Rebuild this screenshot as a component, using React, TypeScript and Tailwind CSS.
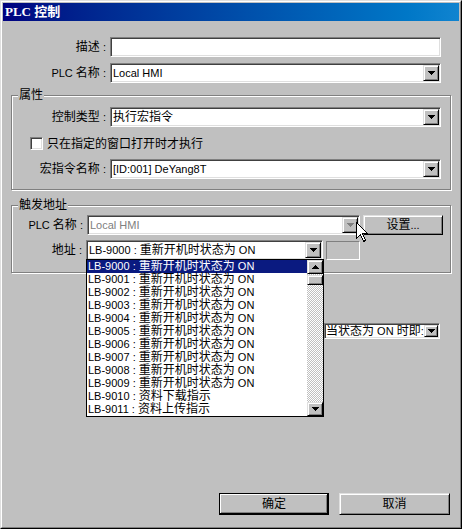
import React from "react"

const sunken =
  "border border-t-[#808080] border-l-[#808080] border-b-white border-r-white shadow-[inset_1px_1px_0_#404040,inset_-1px_-1px_0_#dfdfdf]"
const raised =
  "border border-t-[#dfdfdf] border-l-[#dfdfdf] border-b-black border-r-black shadow-[inset_1px_1px_0_#ffffff,inset_-1px_-1px_0_#808080]"
const etched = "border border-[#808080] shadow-[1px_1px_0_#ffffff,inset_1px_1px_0_#ffffff]"

// Latin runs at 11px, CJK runs at 12px (like the old Tahoma + SimSun mix)
const Txt = ({ children }: { children: string }) => (
  <>
    {children.split(/([\u4e00-\u9fff]+)/).map((part, i) =>
      /[\u4e00-\u9fff]/.test(part) ? (
        <span key={i} className="text-[12px]">
          {part}
        </span>
      ) : (
        <React.Fragment key={i}>{part}</React.Fragment>
      )
    )}
  </>
)

const Arrow = ({ up = false, color = "#000" }: { up?: boolean; color?: string }) => (
  <svg width="7" height="4" viewBox="0 0 7 4" shapeRendering="crispEdges">
    <path
      d={
        up
          ? "M3 0h1v1h1v1h1v1h1v1h-7v-1h1v-1h1v-1h1z"
          : "M0 0h7v1h-1v1h-1v1h-1v1h-1v-1h-1v-1h-1v-1h-1z"
      }
      fill={color}
    />
  </svg>
)

const DropButton = ({ disabled = false }: { disabled?: boolean }) => (
  <div className={`${raised} w-[16px] h-[16px] bg-[#c0c0c0] flex items-center justify-center shrink-0`}>
    <Arrow color={disabled ? "#808080" : "#000"} />
  </div>
)

const Combo = ({ value, className, disabled = false }: { value: string; className: string; disabled?: boolean }) => (
  <div className={`${sunken} ${className} h-[20px] bg-white p-[1px] flex items-center`}>
    <span className={`flex-1 pl-[1px] whitespace-nowrap overflow-hidden ${disabled ? "text-[#808080]" : ""}`}>
      <Txt>{value}</Txt>
    </span>
    <DropButton disabled={disabled} />
  </div>
)

const Label = ({ text, className }: { text: string; className: string }) => (
  <span className={`${className} text-right whitespace-nowrap`}>
    <Txt>{text}</Txt>
  </span>
)

const items = [
  "LB-9000 : 重新开机时状态为 ON",
  "LB-9001 : 重新开机时状态为 ON",
  "LB-9002 : 重新开机时状态为 ON",
  "LB-9003 : 重新开机时状态为 ON",
  "LB-9004 : 重新开机时状态为 ON",
  "LB-9005 : 重新开机时状态为 ON",
  "LB-9006 : 重新开机时状态为 ON",
  "LB-9007 : 重新开机时状态为 ON",
  "LB-9008 : 重新开机时状态为 ON",
  "LB-9009 : 重新开机时状态为 ON",
  "LB-9010 : 资料下载指示",
  "LB-9011 : 资料上传指示",
]

export default function App() {
  return (
    <div className="relative w-[462px] h-[529px] bg-[#c0c0c0] border border-t-[#dfdfdf] border-l-[#dfdfdf] border-r-black border-b-black font-['Liberation_Sans','Noto_Sans_CJK_SC',sans-serif] text-[11px] text-black">
      <div className="h-full flex flex-col border border-t-white border-l-white border-r-[#808080] border-b-[#808080] p-[1px]">
        {/* Title bar */}
        <div className="h-[18px] shrink-0 bg-linear-to-r from-[#000080] to-[#1084d0] flex items-center pl-[2px] text-white font-bold font-['Liberation_Serif','Noto_Sans_CJK_SC',serif] text-[13px]">
          PLC 控制
        </div>

        <div className="flex-1 flex flex-col">
          {/* Top rows */}
          <div className="flex items-center mt-[16px]">
            <Label text="描述 :" className="w-[103px]" />
            <div className={`${sunken} ml-[4px] w-[331px] h-[20px] bg-white`} />
          </div>
          <div className="flex items-center mt-[6px]">
            <Label text="PLC 名称 :" className="w-[103px]" />
            <Combo value="Local HMI" className="ml-[4px] w-[331px]" />
          </div>

          {/* 属性 */}
          <div className={`${etched} relative ml-[8px] mt-[12px] w-[440px] pt-[11px] pb-[10px]`}>
            <span className="absolute left-[6px] -top-[7px] px-[1px] bg-[#c0c0c0] leading-[12px] text-[12px]">属性</span>
            <div className="flex items-center">
              <Label text="控制类型 :" className="w-[94px]" />
              <Combo value="执行宏指令" className="ml-[4px] w-[331px]" />
            </div>
            <div className="flex items-center mt-[10px] h-[13px]">
              <div className={`${sunken} ml-[18px] w-[13px] h-[13px] bg-white`} />
              <span className="ml-[4px] whitespace-nowrap text-[12px]">只在指定的窗口打开时才执行</span>
            </div>
            <div className="flex items-center mt-[9px]">
              <Label text="宏指令名称 :" className="w-[94px]" />
              <Combo value="[ID:001] DeYang8T" className="ml-[4px] w-[331px]" />
            </div>
          </div>

          {/* 触发地址 */}
          <div className={`${etched} relative ml-[8px] mt-[15px] w-[440px] pt-[9px] pb-[12px]`}>
            <span className="absolute left-[6px] -top-[7px] px-[1px] bg-[#c0c0c0] leading-[12px] text-[12px]">触发地址</span>
            <div className="flex items-center">
              <Label text="PLC 名称 :" className="w-[71px]" />
              <Combo value="Local HMI" disabled className="ml-[4px] w-[273px]" />
              <div className={`${raised} ml-[3px] w-[80px] h-[20px] flex items-center justify-center`}>
                <Txt>设置...</Txt>
              </div>
            </div>
            <div className="flex items-center mt-[5px]">
              <Label text="地址 :" className="w-[70px]" />
              <Combo value="LB-9000 : 重新开机时状态为 ON" className="ml-[4px] w-[237px]" />
              <div className="ml-[3px] w-[34px] h-[19px] border border-t-[#808080] border-l-[#808080] border-b-white border-r-white" />
            </div>
          </div>

          {/* partially hidden select */}
          <div className="flex mt-[50px]">
            <div className={`${sunken} ml-[321px] w-[116px] h-[16px] bg-white p-[1px] flex items-center`}>
              <span className="flex-1 whitespace-nowrap overflow-hidden leading-[12px]">
                <Txt>当状态为 ON 时即:</Txt>
              </span>
              <div className={`${raised} w-[14px] h-[12px] bg-[#c0c0c0] flex items-center justify-center shrink-0`}>
                <Arrow />
              </div>
            </div>
          </div>

          {/* Buttons */}
          <div className="mt-auto flex justify-end gap-[10px] pr-[9px] pb-[11px] text-[12px]">
            <div className="w-[110px] h-[22px] border border-black shadow-[inset_-1px_-1px_0_#000000,inset_1px_1px_0_#ffffff,inset_-2px_-2px_0_#808080] flex items-center justify-center">
              确定
            </div>
            <div className={`${raised} w-[111px] h-[22px] flex items-center justify-center`}>取消</div>
          </div>
        </div>
      </div>

      {/* Open dropdown list */}
      <div className="absolute left-[85px] top-[258px] w-[238px] h-[158px] border border-black bg-white flex">
        <div className="flex-1 flex flex-col overflow-hidden">
          {items.map((t, i) => (
            <div
              key={t}
              className={`h-[13px] leading-[13px] pl-[1px] whitespace-nowrap ${i === 0 ? "bg-[#0a1a80] text-white" : ""}`}
            >
              <Txt>{t}</Txt>
            </div>
          ))}
        </div>
        <div className="w-[16px] flex flex-col bg-[image:repeating-conic-gradient(#ffffff_0_25%,#c0c0c0_0_50%)] bg-[length:2px_2px]">
          <div className={`${raised} h-[14px] bg-[#c0c0c0] flex items-center justify-center`}>
            <Arrow up />
          </div>
          <div className={`${raised} h-[10px] mt-[1px] bg-[#c0c0c0]`} />
          <div className="flex-1" />
          <div className={`${raised} h-[14px] bg-[#c0c0c0] flex items-center justify-center`}>
            <Arrow />
          </div>
        </div>
      </div>

      {/* Mouse cursor */}
      <svg className="absolute left-[355px] top-[221px]" width="13" height="21" viewBox="0 0 13 21" shapeRendering="crispEdges">
        <path d="M0.5 0.5V16.5L4.5 12.5L7.5 19.5L9.5 18.5L6.5 11.5H11.5Z" fill="#ffffff" stroke="#000000" strokeWidth="1" />
      </svg>
    </div>
  )
}
